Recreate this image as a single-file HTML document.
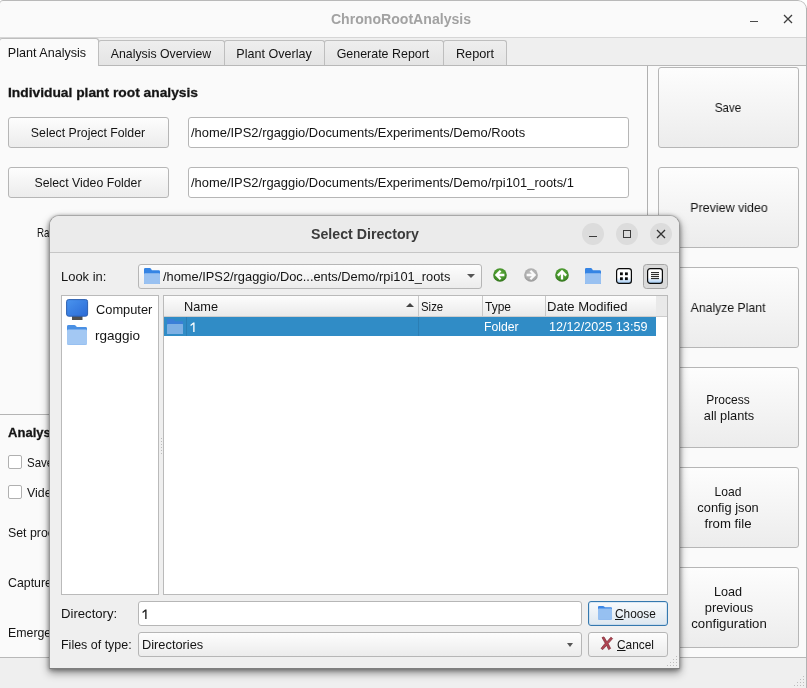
<!DOCTYPE html>
<html>
<head>
<meta charset="utf-8">
<title>ChronoRootAnalysis</title>
<style>
html,body{margin:0;padding:0;}
body{width:807px;height:688px;overflow:hidden;background:#ffffff;font-family:"Liberation Sans",sans-serif;font-size:13px;color:#141414;position:relative;}
*{box-sizing:border-box;}
#root{position:absolute;left:0;top:0;width:807px;height:688px;will-change:transform;}
.abs{position:absolute;}
.t{position:absolute;white-space:nowrap;line-height:16px;height:16px;}
.t.c{text-align:center;}
#win{position:absolute;left:0;top:0;width:807px;height:688px;background:#efefef;border-radius:3px 9px 0 0;overflow:hidden;}
#titlebar{position:absolute;left:-1px;top:0;width:808px;height:38px;background:#fafafa;border:1px solid #b9b9b9;border-bottom:1px solid #d6d6d6;border-radius:4px 9px 0 0;}
.tab{position:absolute;top:40px;height:26px;background:linear-gradient(#eeeeee,#e4e4e4);border:1px solid #bebebe;border-bottom:none;border-radius:3px 3px 0 0;}
.tab.act{top:38px;height:28px;background:#fafafa;z-index:2;}
#pane{position:absolute;left:-1px;top:65px;width:809px;height:593px;background:#fafafa;border:1px solid #b8b8b8;}
.btn{position:absolute;border:1px solid #b6b6b6;border-radius:3px;background:linear-gradient(#fdfdfd,#ececec);}
.inp{position:absolute;border:1px solid #b6b6b6;border-radius:3px;background:#ffffff;}
.cb{position:absolute;width:14px;height:14px;border:1px solid #b0b0b0;border-radius:2px;background:#fff;}
#dlg{position:absolute;left:49px;top:215px;width:631px;height:454px;background:#efefef;border:1px solid #999999;border-top-color:#a8a8a8;border-bottom-color:#7e7e7e;border-radius:10px 10px 0 0;box-shadow:0 4px 8px rgba(0,0,0,0.42),0 1px 4px rgba(0,0,0,0.35);z-index:10;}
#dtitle{position:absolute;left:50px;top:216px;width:629px;height:37px;background:#ebebeb;border-bottom:1px solid #c6c6c6;border-radius:9px 9px 0 0;z-index:11;}
.d{z-index:12;}
.wbtn{position:absolute;width:22px;height:22px;border-radius:11px;background:#dcdcdc;z-index:12;}
.white{position:absolute;background:#fff;border:1px solid #bababa;z-index:12;}
</style>
</head>
<body>
<div id="root">
<div id="win">
<div id="titlebar"></div>
<div class="t c" id="title" style="left:251.33px;width:300px;top:11px;letter-spacing:0.000px;transform:scaleX(0.9723);transform-origin:50% 50%;font-weight:bold;font-size:14.5px;color:#a2a2a2;">ChronoRootAnalysis</div>
<div class="abs" style="left:750px;top:21px;width:8px;height:1px;background:#4a4a4a;"></div>
<svg class="abs" style="left:783px;top:14px" width="10" height="10"><path d="M1 1 L9 9 M9 1 L1 9" stroke="#3e3e3e" stroke-width="1.3" fill="none"/></svg>
<div class="tab" style="left:98px;width:127px;"></div>
<div class="tab" style="left:224px;width:101px;"></div>
<div class="tab" style="left:324px;width:120px;"></div>
<div class="tab" style="left:443px;width:64px;"></div>
<div id="pane"></div>
<div class="tab act" style="left:-1px;width:100px;"></div>
<div style="position:absolute;z-index:3;left:0;top:0;">
<div class="t c" id="tab0" style="left:-103.24px;width:300px;top:45px;letter-spacing:0.000px;transform:scaleX(0.9675);transform-origin:50% 50%;">Plant Analysis</div>
<div class="t c" id="tab1" style="left:11.00px;width:300px;top:46px;letter-spacing:0.000px;transform:scaleX(0.9459);transform-origin:50% 50%;">Analysis Overview</div>
<div class="t c" id="tab2" style="left:123.87px;width:300px;top:46px;letter-spacing:0.000px;transform:scaleX(0.9664);transform-origin:50% 50%;">Plant Overlay</div>
<div class="t c" id="tab3" style="left:233.26px;width:300px;top:46px;letter-spacing:0.000px;transform:scaleX(0.9564);transform-origin:50% 50%;">Generate Report</div>
<div class="t c" id="tab4" style="left:324.55px;width:300px;top:46px;letter-spacing:0.000px;transform:scaleX(0.9789);transform-origin:50% 50%;">Report</div>
</div>
<div class="t" id="hdr" style="left:8.36px;top:85px;letter-spacing:0.000px;transform:scaleX(1.0298);transform-origin:0 50%;font-weight:bold;font-size:13.4px;-webkit-text-stroke:0.3px #1c1c1c;">Individual plant root analysis</div>
<div class="btn" style="left:8px;top:117px;width:161px;height:31px;"></div>
<div class="t c" id="selproj" style="left:-61.65px;width:300px;top:125px;letter-spacing:0.000px;transform:scaleX(0.9468);transform-origin:50% 50%;">Select Project Folder</div>
<div class="inp" style="left:188px;top:117px;width:441px;height:31px;"></div>
<div class="t" id="path1" style="left:190.64px;top:125px;letter-spacing:0.000px;transform:scaleX(0.9944);transform-origin:0 50%;">/home/IPS2/rgaggio/Documents/Experiments/Demo/Roots</div>
<div class="btn" style="left:8px;top:167px;width:161px;height:31px;"></div>
<div class="t c" id="selvid" style="left:-62.40px;width:300px;top:175px;letter-spacing:0.000px;transform:scaleX(0.9455);transform-origin:50% 50%;">Select Video Folder</div>
<div class="inp" style="left:188px;top:167px;width:441px;height:31px;"></div>
<div class="t" id="path2" style="left:190.64px;top:175px;letter-spacing:0.000px;transform:scaleX(0.9942);transform-origin:0 50%;">/home/IPS2/rgaggio/Documents/Experiments/Demo/rpi101_roots/1</div>
<div class="t" id="ra" style="left:36.80px;top:225px;letter-spacing:0.000px;transform:scaleX(0.7500);transform-origin:0 50%;">Ra</div>
<div class="abs" style="left:0;top:414px;width:60px;height:1px;background:#b4b4b4;"></div>
<div class="t" id="analys" style="left:8.00px;top:425px;letter-spacing:0.000px;transform:scaleX(0.9750);transform-origin:0 50%;font-weight:bold;font-size:13.4px;-webkit-text-stroke:0.3px #1c1c1c;">Analysis</div>
<div class="cb" style="left:8px;top:455px;"></div>
<div class="t" id="lsave" style="left:27.00px;top:455px;letter-spacing:0.000px;transform:scaleX(0.8850);transform-origin:0 50%;">Save</div>
<div class="cb" style="left:8px;top:485px;"></div>
<div class="t" id="lvideo" style="left:27.00px;top:485px;letter-spacing:0.000px;transform:scaleX(0.9500);transform-origin:0 50%;">Video</div>
<div class="t" id="lset" style="left:8.00px;top:525px;letter-spacing:0.000px;transform:scaleX(0.9500);transform-origin:0 50%;">Set proc</div>
<div class="t" id="lcap" style="left:8.00px;top:575px;letter-spacing:0.000px;transform:scaleX(0.9500);transform-origin:0 50%;">Capture</div>
<div class="t" id="lem" style="left:8.00px;top:625px;letter-spacing:0.000px;transform:scaleX(0.9500);transform-origin:0 50%;">Emergence</div>
<div class="abs" style="left:647px;top:66px;width:1px;height:591px;background:#b0b0b0;"></div>
<div class="btn" style="left:658px;top:67px;width:141px;height:81px;"></div>
<div class="btn" style="left:658px;top:167px;width:141px;height:81px;"></div>
<div class="btn" style="left:658px;top:267px;width:141px;height:81px;"></div>
<div class="btn" style="left:658px;top:367px;width:141px;height:81px;"></div>
<div class="btn" style="left:658px;top:467px;width:141px;height:81px;"></div>
<div class="btn" style="left:658px;top:567px;width:141px;height:81px;"></div>
<div class="t c" id="bsave" style="left:578.05px;width:300px;top:100px;letter-spacing:0.000px;transform:scaleX(0.8950);transform-origin:50% 50%;">Save</div>
<div class="t c" id="bprev" style="left:578.68px;width:300px;top:200px;letter-spacing:0.000px;transform:scaleX(0.9574);transform-origin:50% 50%;">Preview video</div>
<div class="t c" id="banal" style="left:577.87px;width:300px;top:300px;letter-spacing:0.000px;transform:scaleX(0.9396);transform-origin:50% 50%;">Analyze Plant</div>
<div class="t c" id="bproc1" style="left:578.36px;width:300px;top:392px;letter-spacing:0.000px;transform:scaleX(0.9240);transform-origin:50% 50%;">Process</div>
<div class="t c" id="bproc2" style="left:578.77px;width:300px;top:408px;letter-spacing:0.000px;transform:scaleX(0.9824);transform-origin:50% 50%;">all plants</div>
<div class="t c" id="bl1" style="left:578.14px;width:300px;top:484px;letter-spacing:0.000px;transform:scaleX(0.9317);transform-origin:50% 50%;">Load</div>
<div class="t c" id="bl2" style="left:578.09px;width:300px;top:500px;letter-spacing:0.000px;transform:scaleX(0.9869);transform-origin:50% 50%;">config json</div>
<div class="t c" id="bl3" style="left:578.32px;width:300px;top:516px;letter-spacing:0.000px;transform:scaleX(1.0160);transform-origin:50% 50%;">from file</div>
<div class="t c" id="bp1" style="left:578.19px;width:300px;top:584px;letter-spacing:0.000px;transform:scaleX(0.9722);transform-origin:50% 50%;">Load</div>
<div class="t c" id="bp2" style="left:578.64px;width:300px;top:600px;letter-spacing:0.000px;transform:scaleX(0.9869);transform-origin:50% 50%;">previous</div>
<div class="t c" id="bp3" style="left:578.64px;width:300px;top:616px;letter-spacing:0.000px;transform:scaleX(1.0140);transform-origin:50% 50%;">configuration</div>
<svg class="abs" style="left:794px;top:676px" width="12" height="12" viewBox="0 0 12 12"><g fill="#bdbdbd"><rect x="9" y="0" width="1" height="1"/><rect x="6" y="3" width="1" height="1"/><rect x="9" y="3" width="1" height="1"/><rect x="3" y="6" width="1" height="1"/><rect x="6" y="6" width="1" height="1"/><rect x="9" y="6" width="1" height="1"/><rect x="0" y="9" width="1" height="1"/><rect x="3" y="9" width="1" height="1"/><rect x="6" y="9" width="1" height="1"/><rect x="9" y="9" width="1" height="1"/></g></svg>
<div class="abs" style="left:806px;top:8px;width:1px;height:680px;background:#b2b2b2;z-index:5;"></div>
</div>
<div id="dlg"></div><div id="dtitle"></div>
<div class="d" style="position:absolute;left:0;top:0;">
<div class="t c" id="dt" style="left:214.63px;width:300px;top:225px;letter-spacing:0.000px;transform:scaleX(0.9779);transform-origin:50% 50%;font-weight:bold;font-size:14.5px;color:#3b3b3b;line-height:18px;height:18px;">Select Directory</div>
<div class="wbtn" style="left:582px;top:223px;"></div>
<div class="wbtn" style="left:616px;top:223px;"></div>
<div class="wbtn" style="left:650px;top:223px;"></div>
<div class="abs d" style="left:589px;top:236px;width:8px;height:1px;background:#3c3c3c;"></div>
<div class="abs d" style="left:623px;top:230px;width:8px;height:8px;border:1px solid #3c3c3c;"></div>
<svg class="abs d" style="left:656px;top:229px" width="10" height="10"><path d="M1 1 L9 9 M9 1 L1 9" stroke="#333" stroke-width="1.3" fill="none"/></svg>
<div class="t" id="lookin" style="left:60.78px;top:269px;letter-spacing:0.000px;transform:scaleX(0.9963);transform-origin:0 50%;">Look in:</div>
<div class="btn" style="left:138px;top:264px;width:344px;height:25px;"></div>
<svg class="abs" style="left:144px;top:268px" width="16" height="16" viewBox="0 0 16 16" preserveAspectRatio="none"><path d="M0 1.2 Q0 0 1.2 0 H5.8 Q6.6 0 7 0.7 L7.9 2.3 H14.8 Q16 2.3 16 3.5 V14.8 Q16 16 14.8 16 H1.2 Q0 16 0 14.8 Z" fill="#3584e4"/><path d="M0 6.2 Q0 5.2 1 5.2 H15 Q16 5.2 16 6.2 V15 Q16 16 15 16 H1 Q0 16 0 15 Z" fill="#99c1f1"/></svg>
<div class="t" id="dpath" style="left:163.45px;top:269px;letter-spacing:0.000px;transform:scaleX(0.9867);transform-origin:0 50%;">/home/IPS2/rgaggio/Doc...ents/Demo/rpi101_roots</div>
<div class="abs" style="left:467px;top:274px;width:0;height:0;border-left:4px solid transparent;border-right:4px solid transparent;border-top:4.5px solid #555;"></div>
<svg width="0" height="0" style="position:absolute"><defs><radialGradient id="gg" cx="0.5" cy="0.4" r="0.62"><stop offset="0" stop-color="#63b23f"/><stop offset="0.7" stop-color="#44902a"/><stop offset="1" stop-color="#2c6a16"/></radialGradient><radialGradient id="gr" cx="0.5" cy="0.4" r="0.62"><stop offset="0" stop-color="#c2c2c2"/><stop offset="0.7" stop-color="#ababab"/><stop offset="1" stop-color="#929292"/></radialGradient><linearGradient id="vw" x1="0" y1="0" x2="0" y2="1"><stop offset="0" stop-color="#ffffff"/><stop offset="0.6" stop-color="#ffffff"/><stop offset="1" stop-color="#9cc8f4"/></linearGradient></defs></svg>
<svg class="abs" style="left:491.6px;top:267.3px" width="16" height="16" viewBox="0 0 16 16"><circle cx="8" cy="8" r="6.8" fill="url(#gg)"/><path d="M12.4 8 H5 M8.6 3.8 L4.4 8 L8.6 12.2" stroke="#ffffff" stroke-width="2.3" fill="none" stroke-linejoin="miter"/></svg>
<svg class="abs" style="left:522.6px;top:267.3px" width="16" height="16" viewBox="0 0 16 16"><circle cx="8" cy="8" r="6.8" fill="url(#gr)"/><path d="M3.6 8 H11 M7.4 3.8 L11.6 8 L7.4 12.2" stroke="#fafafa" stroke-width="2.3" fill="none" stroke-linejoin="miter"/></svg>
<svg class="abs" style="left:553.6px;top:267.3px" width="16" height="16" viewBox="0 0 16 16"><circle cx="8" cy="8" r="6.8" fill="url(#gg)"/><path d="M8 12.4 V5 M3.8 8.6 L8 4.4 L12.2 8.6" stroke="#ffffff" stroke-width="2.3" fill="none" stroke-linejoin="miter"/></svg>
<svg class="abs" style="left:585px;top:268px" width="16" height="16" viewBox="0 0 16 16" preserveAspectRatio="none"><path d="M0 1.2 Q0 0 1.2 0 H5.8 Q6.6 0 7 0.7 L7.9 2.3 H14.8 Q16 2.3 16 3.5 V14.8 Q16 16 14.8 16 H1.2 Q0 16 0 14.8 Z" fill="#3584e4"/><path d="M0 6.2 Q0 5.2 1 5.2 H15 Q16 5.2 16 6.2 V15 Q16 16 15 16 H1 Q0 16 0 15 Z" fill="#99c1f1"/></svg>
<svg class="abs" style="left:616px;top:268px" width="16" height="16" viewBox="0 0 16 16"><rect x="0.6" y="0.6" width="14.8" height="14.8" rx="2.6" fill="url(#vw)" stroke="#0a0a0a" stroke-width="1.2"/><rect x="4" y="4.4" width="2.8" height="2.8" fill="#0a0a0a"/><rect x="9" y="4.4" width="2.8" height="2.8" fill="#0a0a0a"/><rect x="4" y="9.3" width="2.8" height="2.8" fill="#0a0a0a"/><rect x="9" y="9.3" width="2.8" height="2.8" fill="#0a0a0a"/></svg>
<div class="abs" style="left:643px;top:264px;width:25px;height:25px;border:1px solid #a6a6a6;border-radius:3.5px;background:#dadada;"></div>
<svg class="abs" style="left:647px;top:268px" width="16" height="16" viewBox="0 0 16 16"><rect x="0.6" y="0.6" width="14.8" height="14.8" rx="2.6" fill="url(#vw)" stroke="#0a0a0a" stroke-width="1.2"/><path d="M4 4.6 H12 M4 6.6 H12 M4 8.6 H12 M4 10.6 H12" stroke="#1a1a1a" stroke-width="1"/></svg>
<div class="white" style="left:61px;top:295px;width:98px;height:300px;"></div>
<svg class="abs d" style="left:66px;top:298px" width="23" height="23" viewBox="0 0 23 23"><rect x="6" y="17" width="10.5" height="5" fill="#505050"/><rect x="5" y="18.2" width="12" height="0" fill="#4f4f4f"/><defs><linearGradient id="mg" x1="0" y1="0" x2="1" y2="1"><stop offset="0" stop-color="#4a94ee"/><stop offset="1" stop-color="#2a6ad6"/></linearGradient></defs><rect x="0.6" y="1.6" width="21" height="16.6" rx="2" fill="url(#mg)" stroke="#2d5fb0" stroke-width="1"/></svg>
<div class="t" id="comp" style="left:95.72px;top:302px;letter-spacing:0.000px;transform:scaleX(0.9860);transform-origin:0 50%;z-index:12;">Computer</div>
<svg class="abs d" style="left:67px;top:325.3px" width="20" height="19.8" viewBox="0 0 16 16" preserveAspectRatio="none"><path d="M0 1.2 Q0 0 1.2 0 H5.8 Q6.6 0 7 0.7 L7.9 1.7 H14.8 Q16 1.7 16 2.9 V14.8 Q16 16 14.8 16 H1.2 Q0 16 0 14.8 Z" fill="#4a90e4"/><path d="M0 4.6 Q0 3.6 1 3.6 H15 Q16 3.6 16 4.6 V15 Q16 16 15 16 H1 Q0 16 0 15 Z" fill="#a3c8f3"/></svg>
<div class="t" id="rg" style="left:94.82px;top:328px;letter-spacing:0.000px;transform:scaleX(1.0389);transform-origin:0 50%;z-index:12;">rgaggio</div>
<svg class="abs d" style="left:161px;top:438px" width="1" height="16" viewBox="0 0 1 16"><g fill="#bcbcbc"><rect x="0" y="0" width="1" height="1"/><rect x="0" y="3" width="1" height="1"/><rect x="0" y="6" width="1" height="1"/><rect x="0" y="9" width="1" height="1"/><rect x="0" y="12" width="1" height="1"/><rect x="0" y="15" width="1" height="1"/></g></svg>
<div class="white" style="left:163px;top:295px;width:505px;height:300px;"></div>
<div class="abs d" style="left:164px;top:296px;width:503px;height:21px;background:linear-gradient(#fdfdfd,#eaeaea);border-bottom:1px solid #cdcdcd;"></div>
<div class="abs d" style="left:418px;top:296px;width:1px;height:20px;background:#c8c8c8;"></div>
<div class="abs d" style="left:482px;top:296px;width:1px;height:20px;background:#c8c8c8;"></div>
<div class="abs d" style="left:545px;top:296px;width:1px;height:20px;background:#c8c8c8;"></div>
<div class="abs d" style="left:656px;top:296px;width:11px;height:20px;background:#e9e9e9;"></div>
<div class="t" id="hname" style="left:183.82px;top:299px;letter-spacing:0.000px;transform:scaleX(0.9811);transform-origin:0 50%;z-index:12;">Name</div>
<div class="abs d" style="left:406px;top:303px;width:0;height:0;border-left:4px solid transparent;border-right:4px solid transparent;border-bottom:4.5px solid #444;"></div>
<div class="t" id="hsize" style="left:420.91px;top:299px;letter-spacing:0.000px;transform:scaleX(0.8770);transform-origin:0 50%;z-index:12;">Size</div>
<div class="t" id="htype" style="left:484.54px;top:299px;letter-spacing:0.000px;transform:scaleX(0.9207);transform-origin:0 50%;z-index:12;">Type</div>
<div class="t" id="hdate" style="left:547.19px;top:299px;letter-spacing:0.000px;transform:scaleX(1.0035);transform-origin:0 50%;z-index:12;">Date Modified</div>
<div class="abs d" style="left:164px;top:317px;width:492px;height:19px;background:#308cc6;"></div>
<div class="abs d" style="left:418px;top:317px;width:1px;height:19px;background:#2b7eb4;"></div>
<div class="abs d" style="left:186px;top:317px;width:1px;height:19px;background:#2b7eb4;"></div>
<svg class="abs d" style="left:167px;top:318.7px" width="16.3" height="15.5" viewBox="0 0 16 16" preserveAspectRatio="none"><path d="M0 1.2 Q0 0 1.2 0 H5.8 Q6.6 0 7 0.7 L7.9 2.3 H14.8 Q16 2.3 16 3.5 V14.8 Q16 16 14.8 16 H1.2 Q0 16 0 14.8 Z" fill="#3a7fd8"/><path d="M0 6.2 Q0 5.2 1 5.2 H15 Q16 5.2 16 6.2 V15 Q16 16 15 16 H1 Q0 16 0 15 Z" fill="#7db0e4"/></svg>
<svg class="abs d" style="left:189.8px;top:321.5px" width="6" height="11" viewBox="0 0 6 11"><path d="M3.25 0.4 H4.55 V9.9 H3.2 V2.2 L0.95 3.95 L0.25 3.05 Z" fill="#ffffff"/></svg>
<div class="t" id="rfolder" style="left:484.28px;top:319px;letter-spacing:0.000px;transform:scaleX(0.9403);transform-origin:0 50%;color:#fff;z-index:12;">Folder</div>
<div class="t" id="rdate" style="left:548.82px;top:319px;letter-spacing:0.000px;transform:scaleX(0.9730);transform-origin:0 50%;color:#fff;z-index:12;">12/12/2025 13:59</div>
<div class="t" id="ldir" style="left:60.78px;top:606px;letter-spacing:0.000px;transform:scaleX(1.0103);transform-origin:0 50%;">Directory:</div>
<div class="inp" style="left:138px;top:601px;width:444px;height:25px;"></div>
<svg class="abs" style="left:142px;top:608.6px" width="6" height="11" viewBox="0 0 6 11"><path d="M3.25 0.4 H4.55 V9.9 H3.2 V2.2 L0.95 3.95 L0.25 3.05 Z" fill="#1c1c1c"/></svg>
<div class="btn" style="left:588px;top:601px;width:80px;height:25px;border-color:#3578ae;background:linear-gradient(#f8fafc,#dde7f0);box-shadow:inset 0 0 0 1px rgba(140,185,228,0.28);"></div>
<svg class="abs" style="left:598px;top:606.3px" width="14" height="13.6" viewBox="0 0 16 16" preserveAspectRatio="none"><path d="M0 1.2 Q0 0 1.2 0 H5.8 Q6.6 0 7 0.7 L7.9 1.5 H14.8 Q16 1.5 16 2.7 V14.8 Q16 16 14.8 16 H1.2 Q0 16 0 14.8 Z" fill="#3b86e6"/><path d="M0 4.0 Q0 3.0 1 3.0 H15 Q16 3.0 16 4.0 V15 Q16 16 15 16 H1 Q0 16 0 15 Z" fill="#96c0f1"/></svg>
<div class="t" id="choose" style="left:615.45px;top:606px;letter-spacing:0.000px;transform:scaleX(0.9102);transform-origin:0 50%;"><span style="text-decoration:underline;">C</span>hoose</div>
<div class="t" id="lfiles" style="left:60.78px;top:637px;letter-spacing:0.000px;transform:scaleX(0.9588);transform-origin:0 50%;">Files of type:</div>
<div class="btn" style="left:138px;top:632px;width:444px;height:25px;"></div>
<div class="t" id="dirs" style="left:142.28px;top:637px;letter-spacing:0.000px;transform:scaleX(0.9852);transform-origin:0 50%;">Directories</div>
<div class="abs" style="left:567px;top:643px;width:0;height:0;border-left:3.5px solid transparent;border-right:3.5px solid transparent;border-top:4px solid #555;"></div>
<div class="btn" style="left:588px;top:632px;width:80px;height:25px;"></div>
<svg class="abs" style="left:600px;top:636px" width="14" height="15" viewBox="0 0 14 15"><path d="M2 1.6 L4 0.9 L6.9 5.8 L10.9 1.2 L12.6 2.6 L8.2 7.6 L10.6 12.4 L8.6 13.6 L6.6 9.4 L2.8 13.6 L1 12.4 L5.2 7.2 Z" fill="#b04452" stroke="#7c2632" stroke-width="0.7" stroke-linejoin="round"/></svg>
<div class="t" id="cancel" style="left:616.92px;top:637px;letter-spacing:0.000px;transform:scaleX(0.9127);transform-origin:0 50%;"><span style="text-decoration:underline;">C</span>ancel</div>
<svg class="abs" style="left:667px;top:656px" width="12" height="12" viewBox="0 0 12 12"><g fill="#bdbdbd"><rect x="9" y="0" width="1" height="1"/><rect x="6" y="3" width="1" height="1"/><rect x="9" y="3" width="1" height="1"/><rect x="3" y="6" width="1" height="1"/><rect x="6" y="6" width="1" height="1"/><rect x="9" y="6" width="1" height="1"/><rect x="0" y="9" width="1" height="1"/><rect x="3" y="9" width="1" height="1"/><rect x="6" y="9" width="1" height="1"/><rect x="9" y="9" width="1" height="1"/></g></svg>
</div>
</div>
</body>
</html>
